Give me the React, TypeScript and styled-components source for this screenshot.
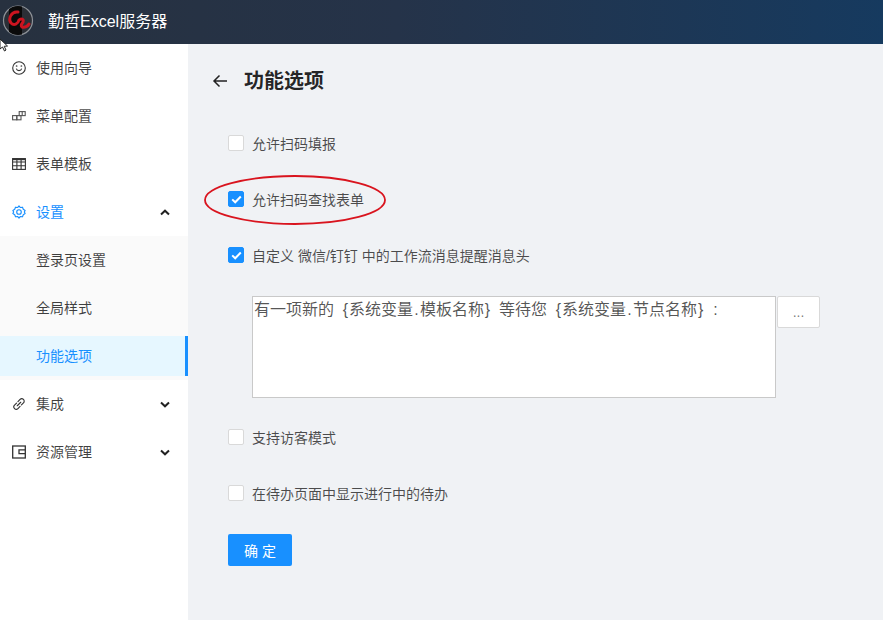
import React from "react";
import styled, { createGlobalStyle } from "styled-components";

const Global = createGlobalStyle`
  html, body { margin: 0; padding: 0; height: 100%; background: #f0f2f5; }
  body { font-family: "Liberation Sans", "Noto Sans CJK SC", sans-serif; font-size: 14px; color: rgba(0,0,0,.75); }
  * { box-sizing: border-box; }
`;

const Page = styled.div`
  width: 883px; height: 620px; display: flex; flex-direction: column; overflow: hidden; position: relative;
`;
const Header = styled.header`
  height: 44px; flex: none; display: flex; align-items: center; padding-left: 2px; gap: 13px;
  background: linear-gradient(90deg, #27313f 0%, #253349 45%, #163a5f 100%);
`;
const LogoWrap = styled.div`
  width: 33px; height: 33px; flex: none; margin-top: -4px;
`;
const Title = styled.div`
  color: #fff; font-size: 16px; line-height: 44px; margin-top: -1px;
`;
const Cursor = styled.svg`
  position: absolute; left: -1px; top: 38px; width: 10px; height: 14px; z-index: 2;
`;
const Body = styled.div`
  flex: 1; display: flex; min-height: 0;
`;
const Sidebar = styled.nav`
  width: 188px; flex: none; background: #fff; display: flex; flex-direction: column;
`;
const MenuItem = styled.div<{ $active?: boolean }>`
  height: 48px; display: flex; align-items: center; padding: 0 18px 0 12px; gap: 10px;
  font-size: 14px; color: ${p => (p.$active ? "#1890ff" : "rgba(0,0,0,.75)")};
  & > svg:first-child { width: 14px; height: 14px; flex: none; }
`;
const ItemLabel = styled.span`
  flex: 1; padding-bottom: 2px;
`;
const SubMenu = styled.div`
  background: #fafafa; display: flex; flex-direction: column; padding: 4px 0;
`;
const SubItem = styled.div<{ $active?: boolean }>`
  height: 40px; margin-bottom: 8px; display: flex; align-items: center; padding: 0 0 2px 36px; font-size: 14px;
  color: ${p => (p.$active ? "#1890ff" : "rgba(0,0,0,.75)")};
  background: ${p => (p.$active ? "#e6f7ff" : "transparent")};
  border-right: ${p => (p.$active ? "3px solid #1890ff" : "0")};
  &:last-child { margin-bottom: 0; }
`;
const Main = styled.main`
  flex: 1; padding: 24px 0 0 24px; min-width: 0;
`;
const TitleRow = styled.div`
  display: flex; align-items: center; height: 26px; gap: 16px; margin-bottom: 41px;
`;
const BackIcon = styled.svg`
  width: 16px; height: 16px; color: #222; flex: none;
`;
const PageTitle = styled.h1`
  margin: 0; font-size: 20px; font-weight: 700; color: rgba(0,0,0,.85); line-height: 26px;
`;
const Form = styled.div`
  padding-left: 16px; display: flex; flex-direction: column; align-items: flex-start;
`;
const Row = styled.label`
  height: 16px; display: flex; align-items: center; gap: 8px; font-size: 14px; margin-bottom: 40px; position: relative;
  color: rgba(0,0,0,.7);
`;
const Box = styled.span<{ $checked?: boolean }>`
  width: 16px; height: 16px; border-radius: 2px; flex: none; display: flex; align-items: center; justify-content: center;
  background: ${p => (p.$checked ? "#1890ff" : "#fff")};
  border: 1px solid ${p => (p.$checked ? "#1890ff" : "#d9d9d9")};
`;
const Ellipse = styled.svg`
  position: absolute; left: -24px; top: -18px; width: 184px; height: 54px; pointer-events: none; overflow: visible;
`;
const EditorRow = styled.div`
  display: flex; align-items: flex-start; margin: -7px 0 31px 24px;
`;
const Editor = styled.div`
  width: 524px; height: 102px; background: #fff; border: 1px solid #c9c9c9; padding: 1px 0 0 1px;
  font-size: 16px; line-height: 24px; color: rgba(0,0,0,.68); word-spacing: 3.55px;
`;
const Half = styled.span`
  display: inline-block; width: 7px; text-align: center;
`;
const DotsButton = styled.button`
  width: 43px; height: 32px; margin-left: 1px; background: #fff; border: 1px solid #d9d9d9; border-radius: 2px;
  font-family: inherit; font-size: 14px; color: rgba(0,0,0,.55); padding: 0;
`;
const Primary = styled.button`
  width: 64px; height: 32px; border: 0; border-radius: 2px; background: #1890ff; color: #fff;
  font-family: inherit; font-size: 14px; margin-top: -7px; padding: 0;
`;

const Check = () => (
  <svg width="11" height="9" viewBox="0 0 11 9" fill="none">
    <path d="M1.2 4.4 L4.2 7.3 L9.8 1.5" stroke="#fff" strokeWidth="2" />
  </svg>
);
const Chevron = ({ up }: { up?: boolean }) => (
  <svg width="10" height="7" viewBox="0 0 10 7" fill="none">
    <path d={up ? "M1 5.5 L5 1.7 L9 5.5" : "M1 1.5 L5 5.3 L9 1.5"} stroke="#222" strokeWidth="2" />
  </svg>
);

const Smile = () => (
  <svg viewBox="0 0 14 14" fill="none" stroke="#333" strokeWidth="1.1">
    <circle cx="7" cy="7" r="6.3" />
    <path d="M4.3 7.6 a2.8 2.8 0 0 0 5.4 0" />
    <circle cx="4.6" cy="5" r=".3" /><circle cx="9.4" cy="5" r=".3" />
  </svg>
);
const Blocks = () => (
  <svg viewBox="0 0 14 14" fill="none" stroke="#555" strokeWidth="1.1">
    <rect x=".6" y="6.6" width="4.2" height="4.2" /><rect x="4.8" y="6.6" width="4.2" height="4.2" />
    <rect x="7.2" y="2.6" width="6" height="4" /><path d="M10.2 2.6v4" />
  </svg>
);
const Table = () => (
  <svg viewBox="0 0 14 14" fill="none" stroke="#333" strokeWidth="1.1">
    <rect x=".6" y="1.6" width="12.8" height="10.8" />
    <path d="M.6 5h12.8M.6 8.7h12.8M4.9 1.6v10.8M9.1 1.6v10.8" />
    <path d="M.6 2.4h12.8" strokeWidth="1.5" />
  </svg>
);
const Gear = () => (
  <svg viewBox="0 0 16 16" fill="none" stroke="#1890ff" strokeWidth="1.3" strokeLinejoin="round">
    <path d="M8 1 L9.6 2.9 L12 2.5 L12.9 4.9 L15 6.2 L14.1 8 L15 9.8 L12.9 11.1 L12 13.5 L9.6 13.1 L8 15 L6.4 13.1 L4 13.5 L3.1 11.1 L1 9.8 L1.9 8 L1 6.2 L3.1 4.9 L4 2.5 L6.4 2.9 Z" />
    <circle cx="8" cy="8" r="2.6" />
  </svg>
);
const LinkIcon = () => (
  <svg viewBox="0 0 16 16" fill="none" stroke="#333" strokeWidth="1.3" strokeLinecap="round">
    <path d="M6.8 5.2 L9.2 2.8 a2.6 2.6 0 0 1 3.9 3.9 L10.8 9.1" />
    <path d="M9.2 10.8 L6.8 13.2 a2.6 2.6 0 0 1 -3.9 -3.9 L5.2 6.9" />
    <path d="M6 10 L10 6" />
  </svg>
);
const Wallet = () => (
  <svg viewBox="0 0 14 14" fill="none" stroke="#333" strokeWidth="1.3">
    <rect x=".7" y="1" width="12.6" height="12" />
    <path d="M13.3 4.8 H7 V8.6 H13.3" />
  </svg>
);

const Logo = () => (
  <svg width="33" height="33" viewBox="0 0 33 33">
    <defs>
      <clipPath id="logoClip"><circle cx="16" cy="16.5" r="14.5" /></clipPath>
    </defs>
    <circle cx="16" cy="16.5" r="14.5" fill="#2b2f36" stroke="#8e9298" strokeWidth="1.2" />
    <rect x="7" y="2" width="13" height="29" fill="#0a0a0a" clipPath="url(#logoClip)" />
    <path d="M16 8 C9 7 6 15 9 19 C12 22 16 20 17 16 C19 14 22 15 21 18 C20 20 18 21 20 23 C23 24 26 22 27 20" fill="none" stroke="#cc1420" strokeWidth="3" strokeLinecap="round" />
  </svg>
);

export default function App() {
  return (
    <Page>
      <Global />
      <Header>
        <LogoWrap><Logo /></LogoWrap>
        <Title>勤哲Excel服务器</Title>
      </Header>
      <Cursor viewBox="0 0 10 14">
        <path d="M1 1 L1 11 L3.5 9 L5.5 13 L7 12 L5.2 8.3 L8.5 8 Z" fill="#fff" stroke="#222" strokeWidth="1" />
      </Cursor>
      <Body>
        <Sidebar>
          <MenuItem><Smile /><ItemLabel>使用向导</ItemLabel></MenuItem>
          <MenuItem><Blocks /><ItemLabel>菜单配置</ItemLabel></MenuItem>
          <MenuItem><Table /><ItemLabel>表单模板</ItemLabel></MenuItem>
          <MenuItem $active><Gear /><ItemLabel>设置</ItemLabel><Chevron up /></MenuItem>
          <SubMenu>
            <SubItem>登录页设置</SubItem>
            <SubItem>全局样式</SubItem>
            <SubItem $active>功能选项</SubItem>
          </SubMenu>
          <MenuItem><LinkIcon /><ItemLabel>集成</ItemLabel><Chevron /></MenuItem>
          <MenuItem><Wallet /><ItemLabel>资源管理</ItemLabel><Chevron /></MenuItem>
        </Sidebar>
        <Main>
          <TitleRow>
            <BackIcon viewBox="0 0 16 16" fill="none" stroke="currentColor" strokeWidth="1.5">
              <path d="M15 8 H2 M7.5 2.5 L2 8 L7.5 13.5" />
            </BackIcon>
            <PageTitle>功能选项</PageTitle>
          </TitleRow>
          <Form>
            <Row><Box />允许扫码填报</Row>
            <Row>
              <Box $checked><Check /></Box>允许扫码查找表单
              <Ellipse viewBox="0 0 184 54">
                <ellipse cx="91" cy="27" rx="90" ry="24" fill="none" stroke="#d9141e" strokeWidth="1.8" />
              </Ellipse>
            </Row>
            <Row><Box $checked><Check /></Box>自定义 微信/钉钉 中的工作流消息提醒消息头</Row>
            <EditorRow>
              <Editor>
                有一项新的 <Half>{"{"}</Half>系统变量<Half>.</Half>模板名称<Half>{"}"}</Half> 等待您 <Half>{"{"}</Half>系统变量<Half>.</Half>节点名称<Half>{"}"}</Half> <Half>:</Half>
              </Editor>
              <DotsButton>...</DotsButton>
            </EditorRow>
            <Row><Box />支持访客模式</Row>
            <Row><Box />在待办页面中显示进行中的待办</Row>
            <Primary>确 定</Primary>
          </Form>
        </Main>
      </Body>
    </Page>
  );
}
